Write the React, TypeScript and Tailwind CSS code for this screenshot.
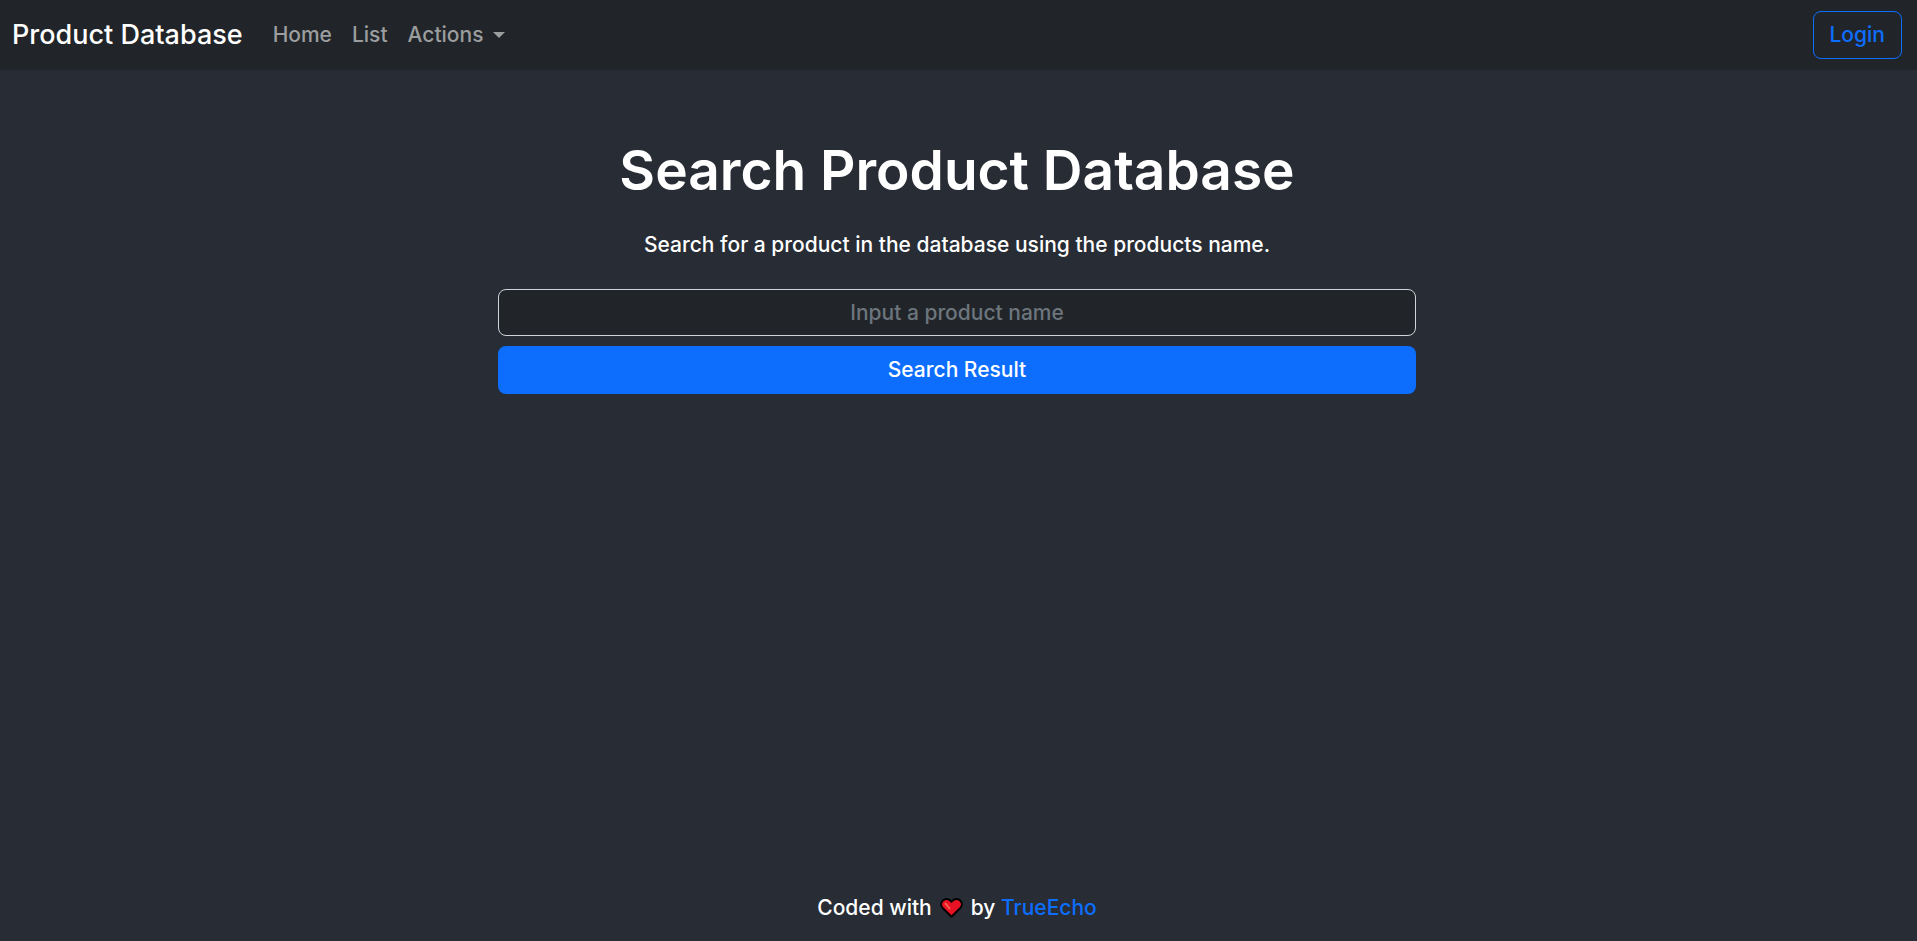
export default function App() {
  return (
    <div className="flex min-h-screen flex-col bg-[#282c34] font-[Inter,sans-serif] text-[21px] leading-[30px] font-medium text-white">
      <nav className="flex h-[70px] items-center bg-[#212529] pr-[15px] pl-3">
        <a href="#" className="mr-5 text-[27px] leading-9">
          Product Database
        </a>
        <div className="flex items-center">
          <a href="#" className="px-2.5 text-[#9b9d9e]">
            Home
          </a>
          <a href="#" className="px-2.5 text-[#9b9d9e]">
            List
          </a>
          <button type="button" aria-haspopup="menu" className="flex items-center gap-2.5 px-2.5 text-[#9b9d9e]">
            Actions
            <svg viewBox="0 0 12 6" className="h-1.5 w-3" fill="currentColor" aria-hidden="true">
              <path d="M0 0H12L6 6Z" />
            </svg>
          </button>
        </div>
        <button type="button" className="ml-auto h-12 rounded-lg border border-[#0d6efd] px-4 text-[#0d6efd]">
          Login
        </button>
      </nav>

      <main className="flex grow flex-col items-center pt-16 pr-[3px] text-center">
        <h1 className="text-[55px] leading-[72px] font-semibold">Search Product Database</h1>
        <p className="mt-6">Search for a product in the database using the products name.</p>
        <form className="mt-[29px] flex w-[48%] flex-col gap-2.5" onSubmit={(event) => event.preventDefault()}>
          <input
            type="text"
            aria-label="Product name"
            placeholder="Input a product name"
            className="h-[47px] w-full rounded-lg border border-[#ced4da] bg-[#212529] px-4 text-center placeholder:text-[#6c757d]"
          />
          <button type="submit" className="h-12 w-full rounded-lg bg-[#0d6efd]">
            Search Result
          </button>
        </form>
      </main>

      <footer className="flex items-center justify-center gap-2 pr-[3px] pb-[18px]">
        <span>Coded with</span>
        <svg viewBox="0 0 23 20" className="h-5 w-[23px]" role="img" aria-label="love">
          <path
            d="M11.5 18.8 2.6 9.9C.6 7.7.8 4.5 2.8 2.6 5 .6 8.2.6 10.2 2.5l1.3 1.2 1.3-1.2c2-1.9 5.2-1.9 7.4.1 2 1.9 2.2 5.1.2 7.3Z"
            fill="#e81224"
            stroke="#000"
            strokeWidth="2"
            strokeLinejoin="round"
          />
          <path d="M5.6 5.6 9.4 10.4" stroke="#f0604d" strokeWidth="2" strokeLinecap="round" fill="none" />
        </svg>
        <span>
          by{' '}
          <a href="#" className="text-[#0d6efd]">
            TrueEcho
          </a>
        </span>
      </footer>
    </div>
  );
}
